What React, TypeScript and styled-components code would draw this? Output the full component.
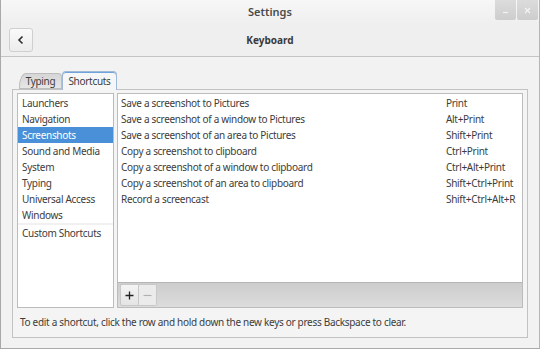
import React from "react";
import styled, { createGlobalStyle } from "styled-components";

const GlobalStyle = createGlobalStyle`
  html, body { margin: 0; padding: 0; background: #f2f2f2; }
  body { font-family: "Noto Sans", "Open Sans", sans-serif; color: #3c3c3c; }
`;

const Window = styled.div`
  width: 540px;
  height: 349px;
  box-sizing: border-box;
  border-left: 1px solid #a9a9a9;
  border-bottom: 1px solid #a9a9a9;
  border-right: 1px solid #b5b5b5;
  background: #f2f2f2;
  display: flex;
  flex-direction: column;
  font-size: 10px;
  letter-spacing: -0.3px;
`;

const TitleBar = styled.div`
  height: 24px;
  position: relative;
  display: flex;
  align-items: center;
  justify-content: center;
  background: linear-gradient(#f7f7f7, #efefef);
  font-size: 11px;
  font-weight: 600;
  letter-spacing: 0;
  color: #4a4a4a;
`;

const Controls = styled.div`
  position: absolute;
  top: 0;
  right: 1px;
  display: flex;
  gap: 1px;
`;

const WinButton = styled.div`
  width: 21px;
  height: 20px;
  background: linear-gradient(#dcdcdc, #cdcdcd);
  border-radius: 0 0 2px 2px;
  display: flex;
  align-items: center;
  justify-content: center;
`;

const Header = styled.div`
  height: 33px;
  display: flex;
  align-items: center;
  padding: 0 8px;
  border-bottom: 1px solid #c4c4c4;
  background: #efefef;
`;

const BackButton = styled.div`
  width: 22px;
  height: 22px;
  border: 1px solid #cfcfcf;
  border-radius: 3px;
  background: linear-gradient(#fafafa, #ececec);
  display: flex;
  align-items: center;
  justify-content: center;
`;

const HeaderTitle = styled.div`
  flex: 1;
  text-align: center;
  font-weight: 700;
  font-size: 10px;
  letter-spacing: 0;
  color: #3a3a3a;
  margin-right: 24px;
`;

const Body = styled.div`
  flex: 1;
  display: flex;
  flex-direction: column;
  padding: 14px 11px 10px 11px;
`;

const TabRow = styled.div`
  display: flex;
  align-items: flex-end;
  height: 19px;
  padding-left: 7px;
  position: relative;
  z-index: 1;
  margin-bottom: -1px;
`;

const Tab = styled.div<{ $active?: boolean }>`
  box-sizing: border-box;
  display: flex;
  align-items: center;
  justify-content: center;
  font-size: 10px;
  color: #3c3c3c;
  border: 1px solid ${(p) => (p.$active ? "#9fb9d6" : "#bdbdbd")};
  border-bottom: ${(p) => (p.$active ? "none" : "1px solid #bdbdbd")};
  border-radius: 4px 4px 0 0;
  ${(p) =>
    p.$active
      ? `
    width: 55px;
    height: 19px;
    background: #f6f6f6;
    box-shadow: inset 0 1px 0 #6fa3dc;
  `
      : `
    width: 43px;
    height: 16px;
    background: linear-gradient(#d6d6d6, #e6e6e6);
    margin-bottom: 1px;
    border-top-left-radius: 7px 14px;
  `}
`;

const Pane = styled.div`
  flex: 1;
  border: 1px solid #c2c2c2;
  background: #f4f4f4;
  padding: 3px 4px 0 4px;
  display: flex;
  flex-direction: column;
`;

const Columns = styled.div`
  display: flex;
  gap: 3px;
  height: 215px;
`;

const Sidebar = styled.div`
  width: 95px;
  border: 1px solid #bcbcbc;
  background: #ffffff;
  display: flex;
  flex-direction: column;
  padding-top: 1px;
`;

const SideItem = styled.div<{ $selected?: boolean }>`
  height: 16px;
  line-height: 16px;
  padding-left: 4px;
  background: ${(p) => (p.$selected ? "#4a90d9" : "transparent")};
  color: ${(p) => (p.$selected ? "#ffffff" : "#3c3c3c")};
  white-space: nowrap;
`;

const SideSeparator = styled.div`
  height: 2px;
  background: #f1f1f1;
`;

const CustomItem = styled(SideItem)`
  height: 17px;
  line-height: 17px;
`;

const Main = styled.div`
  flex: 1;
  border: 1px solid #bcbcbc;
  background: #ffffff;
  display: flex;
  flex-direction: column;
`;

const Rows = styled.div`
  flex: 1;
  padding-top: 1px;
`;

const Row = styled.div`
  height: 16px;
  line-height: 16px;
  display: flex;
  padding-left: 3px;
  white-space: nowrap;
`;

const RowName = styled.div`
  flex: 1;
`;

const RowKeys = styled.div`
  width: 76px;
`;

const Toolbar = styled.div`
  height: 24px;
  background: linear-gradient(#cdcdcd, #dcdcdc);
  border-top: 1px solid #b5b5b5;
  display: flex;
  align-items: center;
  padding-left: 2px;
`;

const ToolButton = styled.div<{ $disabled?: boolean }>`
  width: 17px;
  height: 20px;
  display: flex;
  align-items: center;
  justify-content: center;
  background: ${(p) => (p.$disabled ? "#ebebeb" : "linear-gradient(#f4f4f4, #e4e4e4)")};
  border: 1px solid #c8c8c8;
  border-left: ${(p) => (p.$disabled ? "none" : "1px solid #c8c8c8")};
  border-radius: ${(p) => (p.$disabled ? "0 2px 2px 0" : "2px 0 0 2px")};
`;

const Hint = styled.div`
  padding: 7px 0 0 3px;
  height: 22px;
  color: #3c3c3c;
`;

const categories = [
  "Launchers",
  "Navigation",
  "Screenshots",
  "Sound and Media",
  "System",
  "Typing",
  "Universal Access",
  "Windows",
];

const shortcuts: [string, string][] = [
  ["Save a screenshot to Pictures", "Print"],
  ["Save a screenshot of a window to Pictures", "Alt+Print"],
  ["Save a screenshot of an area to Pictures", "Shift+Print"],
  ["Copy a screenshot to clipboard", "Ctrl+Print"],
  ["Copy a screenshot of a window to clipboard", "Ctrl+Alt+Print"],
  ["Copy a screenshot of an area to clipboard", "Shift+Ctrl+Print"],
  ["Record a screencast", "Shift+Ctrl+Alt+R"],
];

const App = () => {
  return (
    <Window>
      <GlobalStyle />
      <TitleBar>
        Settings
        <Controls>
          <WinButton>
            <svg width="7" height="7" viewBox="0 0 7 7">
              <path d="M1 5.5h5" stroke="#f4f4f4" strokeWidth="1.2" />
            </svg>
          </WinButton>
          <WinButton>
            <svg width="7" height="7" viewBox="0 0 7 7">
              <path d="M1 1l5 5M6 1l-5 5" stroke="#f4f4f4" strokeWidth="1.2" />
            </svg>
          </WinButton>
        </Controls>
      </TitleBar>
      <Header>
        <BackButton>
          <svg width="8" height="10" viewBox="0 0 8 10">
            <path d="M5.5 1.5L2 5l3.5 3.5" fill="none" stroke="#2e2e2e" strokeWidth="1.6" />
          </svg>
        </BackButton>
        <HeaderTitle>Keyboard</HeaderTitle>
      </Header>
      <Body>
        <TabRow>
          <Tab>Typing</Tab>
          <Tab $active>Shortcuts</Tab>
        </TabRow>
        <Pane>
          <Columns>
            <Sidebar>
              {categories.map((c) => (
                <SideItem key={c} $selected={c === "Screenshots"}>
                  {c}
                </SideItem>
              ))}
              <SideSeparator />
              <CustomItem>Custom Shortcuts</CustomItem>
            </Sidebar>
            <Main>
              <Rows>
                {shortcuts.map(([name, keys]) => (
                  <Row key={name}>
                    <RowName>{name}</RowName>
                    <RowKeys>{keys}</RowKeys>
                  </Row>
                ))}
              </Rows>
              <Toolbar>
                <ToolButton>
                  <svg width="9" height="9" viewBox="0 0 9 9">
                    <path d="M4.5 0.5v8M0.5 4.5h8" stroke="#222" strokeWidth="1.3" />
                  </svg>
                </ToolButton>
                <ToolButton $disabled>
                  <svg width="9" height="9" viewBox="0 0 9 9">
                    <path d="M0.5 4.5h8" stroke="#b0b0b0" strokeWidth="1.1" />
                  </svg>
                </ToolButton>
              </Toolbar>
            </Main>
          </Columns>
          <Hint>
            To edit a shortcut, click the row and hold down the new keys or press Backspace to clear.
          </Hint>
        </Pane>
      </Body>
    </Window>
  );
};

export default App;
